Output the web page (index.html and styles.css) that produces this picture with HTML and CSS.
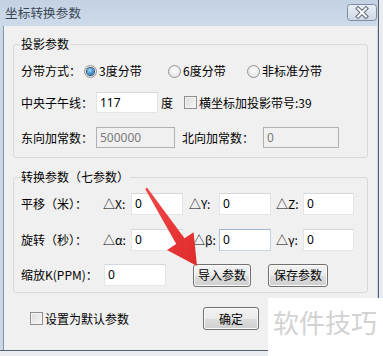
FILE: index.html
```html
<!DOCTYPE html>
<html lang="zh-CN">
<head>
<meta charset="utf-8">
<title>坐标转换参数</title>
<link rel="stylesheet" href="styles.css">
</head>
<body>
<div class="window">
  <div class="titlebar">
    <span class="title">坐标转换参数</span>
    <div class="close-btn">
      <svg width="30" height="17" viewBox="0 0 30 17">
        <defs>
          <linearGradient id="cb" x1="0" y1="0" x2="0" y2="1">
            <stop offset="0" stop-color="#e9eff6"/>
            <stop offset="1" stop-color="#cdd8e4"/>
          </linearGradient>
        </defs>
        <rect x="0.5" y="0.5" width="29" height="16" rx="3" fill="url(#cb)" stroke="#7d8da1"/>
        <path d="M11 4.5 L19 12.5 M19 4.5 L11 12.5" stroke="#5b6778" stroke-width="4" stroke-linecap="square"/>
        <path d="M11 4.5 L19 12.5 M19 4.5 L11 12.5" stroke="#ffffff" stroke-width="2" stroke-linecap="square"/>
      </svg>
    </div>
  </div>
  <div class="client">
    <fieldset class="group g1">
      <legend>投影参数</legend>
      <div class="row r1">
        <span class="lbl w63">分带方式：</span>
        <span class="radio on"></span><span class="rtext w69">3度分带</span>
        <span class="radio"></span><span class="rtext w64">6度分带</span>
        <span class="radio"></span><span class="rtext">非标准分带</span>
      </div>
      <div class="row r2">
        <span class="lbl w75">中央子午线：</span>
        <div class="field w62">117</div>
        <span class="unit">度</span>
        <span class="check"></span><span class="ctext">横坐标加投影带号:39</span>
      </div>
      <div class="row r3">
        <span class="lbl w75">东向加常数：</span>
        <div class="field disabled w79">500000</div>
        <span class="lbl lbl-n">北向加常数：</span>
        <div class="field disabled w76">0</div>
      </div>
    </fieldset>

    <fieldset class="group g2">
      <legend>转换参数（七参数）</legend>
      <div class="row p1">
        <span class="lbl w82">平移（米）：</span>
        <span class="dl w28">△X:</span><div class="field w52">0</div>
        <span class="dl w30 ml6">△Y:</span><div class="field w52">0</div>
        <span class="dl w27 ml5">△Z:</span><div class="field w51">0</div>
      </div>
      <div class="row p2">
        <span class="lbl w82">旋转（秒）：</span>
        <span class="dl w28">△α:</span><div class="field w52">0</div>
        <span class="dl w26 ml10">△β:</span><div class="field w52 focus">0</div>
        <span class="dl w27 ml5">△γ:</span><div class="field w51">0</div>
      </div>
      <div class="row p3">
        <span class="lbl w83">缩放K(PPM)：</span>
        <div class="field w62">0</div>
        <div class="btn b-import">导入参数</div>
        <div class="btn b-save">保存参数</div>
      </div>
    </fieldset>

    <div class="footer">
      <span class="check"></span><span class="ctext">设置为默认参数</span>
      <div class="btn b-ok">确定</div>
    </div>
  </div>
</div>

<div class="watermark">软件技巧</div>

<svg class="arrow" width="383" height="356" viewBox="0 0 383 356">
  <defs>
    <linearGradient id="ar" x1="0" y1="0" x2="1" y2="1">
      <stop offset="0" stop-color="#f04848"/>
      <stop offset="1" stop-color="#e02a2a"/>
    </linearGradient>
  </defs>
  <polygon points="147,187.5 184.5,238.3 193.6,232.2 197,266 167,250 176.2,243.9 145.2,189" fill="url(#ar)"/>
</svg>
</body>
</html>
```

FILE: styles.css
```css
* { box-sizing: border-box; }

html, body {
  margin: 0;
  padding: 0;
}

body {
  width: 383px;
  height: 356px;
  overflow: hidden;
  background: #e9edf1;
  font-family: "Noto Sans CJK SC", "Noto Sans", sans-serif;
  font-size: 12px;
  color: #000;
  position: relative;
}

.window {
  width: 379px;
  height: 351px;
  display: flex;
  flex-direction: column;
  background: #c9d7e6;
  border-right: 1px solid #55606c;
  border-bottom: 1px solid #55606c;
}

.titlebar {
  height: 26px;
  flex: none;
  display: flex;
  align-items: center;
  justify-content: space-between;
  padding: 0 0 0 5px;
  background: linear-gradient(#c3d2e3, #cddaea);
}

.title {
  font-size: 12.5px;
  line-height: 16px;
  color: #3a4654;
  letter-spacing: 0.2px;
}

.close-btn {
  width: 30px;
  height: 17px;
  margin-right: 1px;
  margin-top: -1px;
  display: flex;
}

.client {
  flex: 1;
  margin-left: 3px;
  margin-right: 1px;
  background: #f0f0f0;
  border-left: 1px solid #8794a3;
  display: flex;
  flex-direction: column;
}

.group {
  margin: 10px 9px 0 9px;
  padding: 0 0 9px 7px;
  border: 1px solid #d5dadf;
  border-radius: 3px;
  min-width: 0;
}

.group legend {
  padding: 0 1px;
  margin-left: -1px;
  line-height: 16px;
  font-size: 12px;
}

.g2 {
  margin-top: 11px;
  padding-bottom: 5px;
}

.row {
  display: flex;
  align-items: center;
}

.r1 { margin-top: 8px; height: 22px; }
.r2 { margin-top: 10px; height: 21px; }
.r3 { margin-top: 14px; height: 21px; }

.p1 { margin-top: 8px; height: 22px; }
.p2 { margin-top: 14px; height: 22px; }
.p3 { margin-top: 12px; height: 24px; }

.lbl, .rtext, .ctext, .unit, .dl {
  line-height: 16px;
  white-space: nowrap;
  flex: none;
}

.w26 { width: 26px; }
.w27 { width: 27px; }
.w28 { width: 28px; }
.w30 { width: 30px; }
.w51 { width: 51px; }
.w52 { width: 52px; }
.w62 { width: 62px; }
.w63 { width: 63px; }
.w64 { width: 64px; }
.w69 { width: 69px; }
.w75 { width: 75px; }
.w76 { width: 76px; }
.w79 { width: 79px; }
.w82 { width: 82px; }
.w83 { width: 83px; }

.ml5 { margin-left: 5px; }
.ml6 { margin-left: 6px; }
.ml10 { margin-left: 10px; }

.lbl-n {
  width: 81px;
  margin-left: 7px;
}

.radio {
  width: 13px;
  height: 13px;
  border-radius: 50%;
  border: 1px solid #8e9297;
  background: radial-gradient(circle at 50% 40%, #ffffff 0%, #e6e6e6 70%, #d4d4d4 100%);
  flex: none;
  margin-right: 2px;
  position: relative;
  display: flex;
  align-items: center;
  justify-content: center;
}

.radio.on::after {
  content: "";
  width: 7px;
  height: 7px;
  border-radius: 50%;
  background: radial-gradient(circle at 40% 35%, #a9dcf7 0%, #3a8fca 55%, #1d5d8f 100%);
  box-shadow: 0 0 0 1px #274b6b;
}

.rtext { flex: none; }

.check {
  width: 13px;
  height: 13px;
  flex: none;
  border: 1px solid #8e8f8f;
  background: linear-gradient(135deg, #dcdcdc, #f6f6f6);
  box-shadow: inset 0 0 0 1px #f4f4f4;
  margin-right: 2px;
}

.r2 .check { margin-left: 11px; }

.unit { margin-left: 3px; }

.field {
  height: 21px;
  flex: none;
  background: #fff;
  border: 1px solid #e2e5e9;
  border-top-color: #d3d6da;
  padding: 0 3px;
  line-height: 19px;
  font-family: "Noto Sans", "Noto Sans CJK SC", sans-serif;
  font-size: 12px;
  color: #000;
}

.p1 .field, .p2 .field, .p3 .field { height: 22px; line-height: 20px; }

.field.disabled {
  background: #f0f0f0;
  border: 1px solid #aeb2b6;
  color: #7a7a7a;
}

.field.focus {
  border-color: #c5d3e2;
  border-top-color: #9fb4cc;
  border-left-color: #b0c2d6;
}

.dl {
  font-size: 12px;
}

.btn {
  height: 23px;
  flex: none;
  border: 1px solid #707070;
  border-radius: 3px;
  background: linear-gradient(#f2f2f2 0%, #ebebeb 50%, #dddddd 51%, #cfcfcf 100%);
  box-shadow: inset 0 0 0 1px #fbfbfb;
  display: flex;
  align-items: center;
  justify-content: center;
  line-height: 16px;
}

.b-import { width: 58px; margin-left: 27px; }
.b-save { width: 60px; margin-left: 17px; }

.footer {
  display: flex;
  align-items: center;
  margin-top: 14px;
  padding-left: 26px;
  height: 23px;
}

.footer .ctext { width: 158px; }

.b-ok { width: 56px; }

.watermark {
  position: absolute;
  left: 268px;
  top: 298px;
  width: 115px;
  height: 58px;
  background: #ffffff;
  color: #d2d2d2;
  font-size: 26px;
  line-height: 30px;
  padding: 9px 0 0 5px;
  white-space: nowrap;
  letter-spacing: 0;
}

.arrow {
  position: absolute;
  left: 0;
  top: 0;
  pointer-events: none;
}
```
